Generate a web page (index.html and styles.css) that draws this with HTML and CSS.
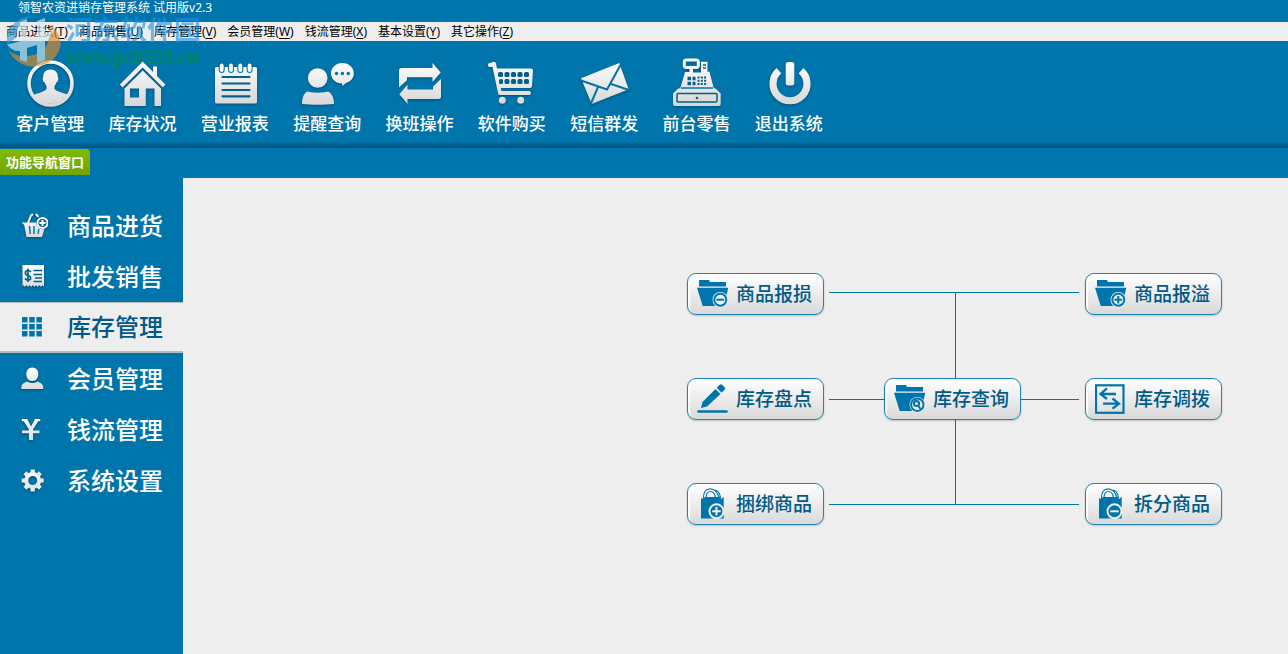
FILE: index.html
```html
<!DOCTYPE html>
<html lang="zh-CN">
<head>
<meta charset="utf-8">
<title>领智农资进销存管理系统</title>
<link rel="stylesheet" href="styles.css">
</head>
<body>
<svg class="defs" aria-hidden="true">
  <defs>
    <linearGradient id="silver" gradientUnits="userSpaceOnUse" x1="0" y1="4" x2="0" y2="50"><stop offset="0" stop-color="#ffffff"/><stop offset="1" stop-color="#d6d6d6"/></linearGradient>
    <linearGradient id="silver-small" gradientUnits="userSpaceOnUse" x1="0" y1="3" x2="0" y2="27"><stop offset="0" stop-color="#ffffff"/><stop offset="1" stop-color="#dadada"/></linearGradient>
    <symbol id="folder" viewBox="0 0 32 34"><path fill="#0075ab" d="M2 3h10l1 2h16v4.500H2zM0 10.700h31.300L27 29H5.700z"/><circle cx="23.300" cy="22.700" r="7.800" fill="#eee"/></symbol>
    <symbol id="bag" viewBox="0 0 32 34"><path fill="#0075ab" d="M4 11l2 1 2-2h15l1 2 2.700-2v21.500H4z"/><path fill="none" stroke="#0075ab" stroke-width="1.200" d="M6.500 12C6 5 9 1.800 13 1.800S21 5 22 11M9 11c0-4 1.500-6.500 4.500-6.500S18 7 18.500 11M17 3c4 0 6 3 6.500 8"/></symbol>
  </defs>
</svg>
<header class="titlebar"><h1>领智农资进销存管理系统 试用版v2.3</h1></header>
<nav class="menubar" aria-label="菜单">
  <button type="button">商品进货(<u>T</u>)</button>
  <button type="button">商品销售(<u>U</u>)</button>
  <button type="button">库存管理(<u>V</u>)</button>
  <button type="button">会员管理(<u>W</u>)</button>
  <button type="button">钱流管理(<u>X</u>)</button>
  <button type="button">基本设置(<u>Y</u>)</button>
  <button type="button">其它操作(<u>Z</u>)</button>
</nav>
<div class="toolbar">
  <div class="tools">
    <button type="button"><svg viewBox="0 0 54 52"><circle cx="27.500" cy="27.500" r="21.500" fill="none" stroke="url(#silver)" stroke-width="3.600"/><path fill="url(#silver)" d="M27.500 13.500c4.800 0 7.500 3 7.300 7.500l.7 1.500-1 3.500-1.200.5c-.4 2-1.300 3-1.800 3.500v3c2 2.500 8 3.500 13 5.500-3 5-9.500 9-17 9S14 44 10.500 39c5-2 11-3.500 13-6v-3c-.5-.5-1.400-1.500-1.800-3.500l-1.200-.5-1-3.500.7-1.500c-.2-4.500 2.500-7.500 7.300-7.500z"/></svg><span>客户管理</span></button>
    <button type="button"><svg viewBox="0 0 54 52"><path fill="url(#silver)" fill-rule="evenodd" d="M27.700 5.500 38 16v-5.500h4V20l8.500 8.500-2.700 3L27.700 11.500 7.500 31.500l-2.700-3zM27.700 14.500 46 32.500V50h-6.500V32.500h-8.700V50H9.500V32.500zM15 32.500v9h9v-9z"/></svg><span>库存状况</span></button>
    <button type="button"><svg viewBox="0 0 54 52"><rect x="7" y="11" width="42" height="36.500" rx="1.500" fill="url(#silver)"/><g stroke="#0075ab" stroke-width="6" stroke-linecap="round"><path d="M13.700 11v3M23 11v3M32.300 11v3M41.600 11v3"/></g><g stroke="#fff" stroke-width="3.800" stroke-linecap="round"><path d="M13.700 9.500v4.500M23 9.500v4.500M32.300 9.500v4.500M41.600 9.500v4.500"/></g><path stroke="#00618f" stroke-width="2.200" stroke-linecap="round" d="M14.500 21h27M14.500 27.500h27M14.500 34h27M14.500 40.300h27"/></svg><span>营业报表</span></button>
    <button type="button"><svg viewBox="0 0 54 52"><g fill="url(#silver)"><circle cx="17.700" cy="22" r="9.800"/><path d="M2 48c0-6 1.500-10.500 5.500-12.500 6 1.600 14 1.600 20.500 0 4 2 6 6.500 6 12.500-9 1-23 1-32 0z"/><path d="M42.300 7c6.500 0 11.500 4.300 11.500 10.300 0 5-3 8.200-7.500 9.500L42.500 30l-.5-2.500c-6.500 0-11-4.500-11-10.200C31 11.300 36 7 42.300 7z"/></g><g fill="#0075ab"><circle cx="36.500" cy="17.500" r="1.700"/><circle cx="42.400" cy="17.500" r="1.700"/><circle cx="48.300" cy="17.500" r="1.700"/></g></svg><span>提醒查询</span></button>
    <button type="button"><svg viewBox="0 0 54 52"><path fill="url(#silver)" d="M7 31.500V14.500Q7 12 9.500 12h31V7l8.200 9.400-8.200 9.600v-4.700H15v2.900zM49 23v17.500q0 2.500-2.500 2.500h-31v5L7.300 38.300 15.500 28.700v4.700H41v-2.900z"/></svg><span>换班操作</span></button>
    <button type="button"><svg viewBox="0 0 54 52"><path fill="none" stroke="url(#silver)" stroke-width="4" stroke-linecap="round" stroke-linejoin="round" d="M5 9l4-1 6 29h29"/><path fill="url(#silver)" d="M10.500 12.500H46q2 0 2 2L47 30q0 2-2 2H14z"/><g fill="#00618f"><rect x="13" y="16" width="5" height="5" rx="1.500"/><rect x="19.500" y="16" width="5" height="5" rx="1.500"/><rect x="26" y="16" width="5" height="5" rx="1.500"/><rect x="32.500" y="16" width="5" height="5" rx="1.500"/><rect x="39" y="16" width="5" height="5" rx="1.500"/><rect x="14" y="23" width="4" height="5" rx="1.500"/><rect x="19.500" y="23" width="5" height="5" rx="1.500"/><rect x="26" y="23" width="5" height="5" rx="1.500"/><rect x="32.500" y="23" width="5" height="5" rx="1.500"/><rect x="39" y="23" width="5" height="5" rx="1.500"/></g><path fill="none" stroke="#0075ab" stroke-width="1.800" d="M16 33.500h33"/><path fill="url(#silver)" d="M20.800 44.300a3.500 3.500 0 1 1-7 0 3.500 3.500 0 1 1 7 0zM39.200 44.300a3.500 3.500 0 1 1-7 0 3.500 3.500 0 1 1 7 0z"/></svg><span>软件购买</span></button>
    <button type="button"><svg viewBox="0 0 54 52"><path fill="url(#silver)" d="M4 22.300 42.300 7l9.400 26.300L14.700 48z"/><path fill="none" stroke="#0075ab" stroke-width="2" d="M4 24.500 30 33.500 43.500 9M21 31 13.500 48.500M34 28l18 6"/></svg><span>短信群发</span></button>
    <button type="button"><svg viewBox="0 0 54 52"><rect x="15.300" y="4" width="14" height="7.500" rx="2" fill="none" stroke="url(#silver)" stroke-width="3"/><path fill="url(#silver)" fill-rule="evenodd" d="M20.500 12.500h3.500v4h8V5.700h6.500v10h2L44.500 31q.5 1.500 2 1.500l5.200 5V48q0 2-2 2H6q-2 0-2-2V37.500l5.200-5q2 0 2.500-1.500L16 16h4.500z"/><path stroke="#0075ab" stroke-width="1.500" d="M12 32h32"/><rect x="8" y="37.500" width="40" height="8.500" rx="1" fill="none" stroke="#00618f" stroke-width="1.500"/><circle cx="28" cy="42" r="1.300" fill="#00618f"/><path fill="none" stroke="#00618f" stroke-width="3.500" stroke-dasharray="3.500 1.500" d="M18.500 22.500h8M18.500 27.500h8"/><path fill="none" stroke="#00618f" stroke-width="2" stroke-dasharray="2 1.300" d="M28.500 21.500h9M28.500 24.800h9M28.500 28h9"/><path stroke="#00618f" stroke-width="1.300" d="M34 9h3M34 12h3"/></svg><span>前台零售</span></button>
    <button type="button"><svg viewBox="0 0 54 52"><path fill="none" stroke="url(#silver)" stroke-width="7.200" d="M17 14.800a17 17 0 1 0 22 0"/><rect x="23.700" y="6" width="8.600" height="23.500" rx="2.500" fill="url(#silver)"/></svg><span>退出系统</span></button>
  </div>
</div>
<div class="tabstrip"><button type="button" class="tab">功能导航窗口</button></div>
<div class="workspace">
  <nav class="sidebar" aria-label="功能导航">
    <a href="#purchase"><svg viewBox="0 0 30 30"><path fill="url(#silver-small)" d="M3.500 11.500H18a7 7 0 0 0 8.300 6.500L24 26H8.500L6.200 14z"/><path fill="none" stroke="#fff" stroke-width="2" d="M10 12l3-7.500q.5-1 2-1M17.500 3.500q2 0 2.500 2.500"/><circle cx="24.500" cy="12" r="5" fill="none" stroke="#fff" stroke-width="2"/><path stroke="#fff" stroke-width="2" d="M21.500 12h6M24.500 9v6"/><path stroke="#0075ab" stroke-width="1.500" d="M11.500 15l.7 8M16 15v8M20.700 18l-.5 5"/></svg><span>商品进货</span></a>
    <a href="#wholesale"><svg viewBox="0 0 30 30"><path fill="url(#silver-small)" d="M4.500 3H26v22l-1.500-2-1.600 2-1.600-2-1.600 2-1.600-2-1.600 2-1.600-2-1.600 2-1.600-2-1.600 2-1.600-2-1.600 2-1.500-2L4.500 25z"/><path fill="none" stroke="#00618f" stroke-width="1.700" d="M13 10q-1-1.500-3-1.500c-3.500 0-3.500 4 0 5s3.500 4.500 0 4.500Q8 18 7 16.500M10 6.500v13.500M15.500 8.500H24M15.500 12.500H24M17 16H24M15.500 19.500H24"/></svg><span>批发销售</span></a>
    <a href="#stock" class="active" aria-current="page"><svg viewBox="0 0 30 30"><path fill="#0075ab" d="M4 5h5.500v5.500H4zm7.200 0h5.500v5.500h-5.500zm7.200 0h5.500v5.500h-5.500zM4 12h5.500v5.500H4zm7.200 0h5.500v5.500h-5.500zm7.200 0h5.500v5.500h-5.500zM4 19h5.500v5.500H4zm7.200 0h5.500v5.500h-5.500zm7.200 0h5.500v5.500h-5.500z"/></svg><span>库存管理</span></a>
    <a href="#members"><svg viewBox="0 0 30 30"><path fill="url(#silver-small)" d="M14.300 3.500c4 0 6 3 6 6.500s-1.800 7-6 7-6-3.500-6-7 2-6.500 6-6.500zM3.300 25c0-4 .5-5.500 6-7.500 3 2 7 2 10 0 5.500 2 6 3.500 6 7.500z"/></svg><span>会员管理</span></a>
    <a href="#cash"><svg viewBox="0 0 30 30"><path fill="url(#silver-small)" d="M3.800 4h5.400l3.800 7.500L17 4h5.200v2.200h-2L15 14.500v1h6.500v2.800H15V25h-4v-6.700H4v-2.800h7v-1L5.800 6.200h-2z"/></svg><span>钱流管理</span></a>
    <a href="#settings"><svg viewBox="0 0 30 30"><circle cx="14.700" cy="14.500" r="6.500" fill="none" stroke="url(#silver-small)" stroke-width="4"/><path fill="none" stroke="#ededed" stroke-width="4.200" d="M14.700 3.500v3.500M14.700 22v3.500M3.700 14.500h3.500M22.200 14.500h3.500M7 6.800l2.400 2.400M20 19.800l2.400 2.400M7 22.200l2.400-2.400M20 9.200l2.400-2.400"/></svg><span>系统设置</span></a>
  </nav>
  <main class="canvas">
    <div class="diagram">
      <svg class="links" viewBox="0 0 535 252" aria-hidden="true"><path d="M142 19.500h250M268.500 19.500v212M142 126.500h250M142 231.500h250"/></svg>
      <button type="button" class="node"><svg viewBox="0 0 32 34"><use href="#folder"/><g class="badge"><circle cx="23.300" cy="22.700" r="6"/><path d="M19.500 22.700h7.600"/></g></svg>商品报损</button>
      <button type="button" class="node last"><svg viewBox="0 0 32 34"><use href="#folder"/><g class="badge"><circle cx="23.300" cy="22.700" r="6"/><path d="M19.500 22.700h7.600M23.300 19v7.600"/></g></svg>商品报溢</button>
      <button type="button" class="node"><svg viewBox="0 0 32 34"><path fill="#0075ab" d="M4 26l1.500-6L18.500 7l5 5L10 24.500zM19.700 5.800l3-3q1.200-1 2.400 0l2.500 2.500q1 1.200 0 2.400l-3 3z"/><path stroke="#0075ab" stroke-width="2.600" stroke-linecap="round" d="M1.500 29.500h28"/></svg>库存盘点</button>
      <button type="button" class="node"><svg viewBox="0 0 32 34"><use href="#folder"/><g class="badge"><circle cx="23.300" cy="22.700" r="6.200"/><circle cx="22.500" cy="21.500" r="2.600"/><path d="M24 23.500l2.500 3.500"/></g></svg>库存查询</button>
      <button type="button" class="node"><svg viewBox="0 0 32 34"><g fill="none" stroke="#0075ab"><rect x="1" y="3.300" width="27.500" height="27.500" stroke-width="2.200"/><path stroke-width="2.300" d="M21 12H5.500M12 6.300 5.500 12l6.500 5M8 21.700h16M17.500 16.500l6.500 5.200-6.500 5"/></g></svg>库存调拨</button>
      <button type="button" class="node"><svg viewBox="0 0 32 34"><use href="#bag"/><g class="badge filled"><circle cx="19.500" cy="24.300" r="7"/><path d="M15.300 24.300h8.400M19.500 20.100v8.400"/></g></svg>捆绑商品</button>
      <button type="button" class="node last"><svg viewBox="0 0 32 34"><use href="#bag"/><g class="badge filled"><circle cx="19.500" cy="24.300" r="7"/><path d="M15.300 24.300h8.400"/></g></svg>拆分商品</button>
    </div>
  </main>
</div>
<div class="watermark" aria-hidden="true">
  <svg viewBox="0 0 58 54"><path fill="#3d9edb" d="M8 42C-3 26 4 5 27 2 18 6 12 15 12 24l-9 6z"/><path fill="#e08a28" d="M5 37c10 8 30 8 39-8l2-18c14 9 14 26 1 36-15 10-34 6-42-10z"/><path fill="#d5ecf5" d="M3 30c5 0 9-2 13-3V8l7-3v20l10-3V7l8-3v16q6-2 10-7-3 10-10 14v19l-8 3V31l-10 3v14l-7-2V37q-8 1-13-7z"/></svg>
  <div><p class="mark-name">河东软件园</p><p class="mark-url">www.pc0359.cn</p></div>
</div>
</body>
</html>
```
FILE: styles.css
```css
* { box-sizing: border-box; }
body {
  margin: 0;
  min-height: 100vh;
  display: flex;
  flex-direction: column;
  position: relative;
  background: #eee;
  color: #fff;
  font-family: "Noto Sans", "Noto Sans CJK SC", sans-serif;
}
button { border: 0; padding: 0; background: none; color: inherit; font: inherit; cursor: pointer; }
.defs { position: absolute; width: 0; height: 0; }

.titlebar { background: #0075ab; padding: 0 18px; height: 22px; }
.titlebar h1 { margin: 0; font-size: 12px; font-weight: 400; line-height: 16px; }

.menubar { display: flex; gap: 11px; height: 19px; padding: 0 6px; background: #eee; color: #000; font-size: 12px; line-height: 19px; }
.menubar u { text-underline-offset: 2px; }

.toolbar {
  height: 107px;
  padding: 15px 4px 0;
  background: linear-gradient(to top, #00507a 0, #0075ab 7px);
}
.tools { display: grid; grid-template-columns: repeat(9, 1fr); width: 831px; }
.tools button { display: flex; flex-direction: column; align-items: center; gap: 4px; font-size: 17px; font-weight: 500; line-height: 24px; }
.tools svg { width: 54px; height: 52px; filter: drop-shadow(0 1px 1px rgba(0, 40, 70, .5)); }

.tabstrip { height: 30px; padding-top: 1px; background: linear-gradient(to top, #0075bb 0, #0075ab 4px); }
.tab {
  display: block;
  height: 26px;
  padding: 0 6px;
  border-radius: 0 4px 0 0;
  background: linear-gradient(#82ba08, #6ea500);
  font-size: 13px;
  font-weight: 700;
  line-height: 24px;
}

.workspace { flex: 1; display: flex; }
.sidebar { width: 183px; flex: none; padding-top: 22px; background: #0075ab; }
.sidebar a {
  display: flex;
  align-items: center;
  gap: 19px;
  height: 51px;
  padding-left: 18px;
  color: #fff;
  font-size: 24px;
  font-weight: 500;
  line-height: 30px;
  text-decoration: none;
}
.sidebar svg { width: 30px; height: 30px; filter: drop-shadow(0 1px 1px rgba(0, 40, 70, .5)); }
.sidebar .active { background: #eee; color: #005a87; border-top: 1px solid #b5bcc0; border-bottom: 2px solid #b5bcc0; }
.sidebar .active svg { filter: none; }

.canvas { flex: 1; padding: 95px 66px 0 0; background: #eee; }
.diagram {
  position: relative;
  display: grid;
  grid-template-columns: 197px 201px 137px;
  row-gap: 63px;
  width: 535px;
  margin-left: auto;
}
.links { position: absolute; inset: 0; width: 100%; height: 100%; fill: none; stroke: #0075ab; }
.node {
  position: relative;
  display: flex;
  align-items: center;
  gap: 7px;
  width: 137px;
  height: 42px;
  padding-left: 9px;
  border: 1px solid #1c85b3;
  border-radius: 9px;
  background: linear-gradient(#fff, #d9d9d9);
  box-shadow: inset 2px 2px 1px #fff, 0 1px 2px rgba(0, 0, 0, .2);
  color: #005a87;
  font-size: 19px;
  font-weight: 500;
  line-height: 26px;
  white-space: nowrap;
}
.node.last { grid-column: 3; }
.node svg { width: 32px; height: 34px; flex: none; }
.badge { fill: none; stroke: #0075ab; stroke-width: 2; }
.badge.filled { fill: #0075ab; stroke: #eee; }

.watermark { position: absolute; left: 4px; top: 14px; display: flex; gap: 4px; pointer-events: none; }
.watermark svg { width: 58px; height: 54px; opacity: .65; }
.watermark p { margin: 0; white-space: nowrap; }
.mark-name { color: #1690e8; font-size: 27px; font-weight: 700; line-height: 32px; opacity: .6; }
.mark-url { color: #008c50; font-family: "Liberation Serif", serif; font-size: 20px; font-weight: 700; line-height: 22px; opacity: .8; }
```
